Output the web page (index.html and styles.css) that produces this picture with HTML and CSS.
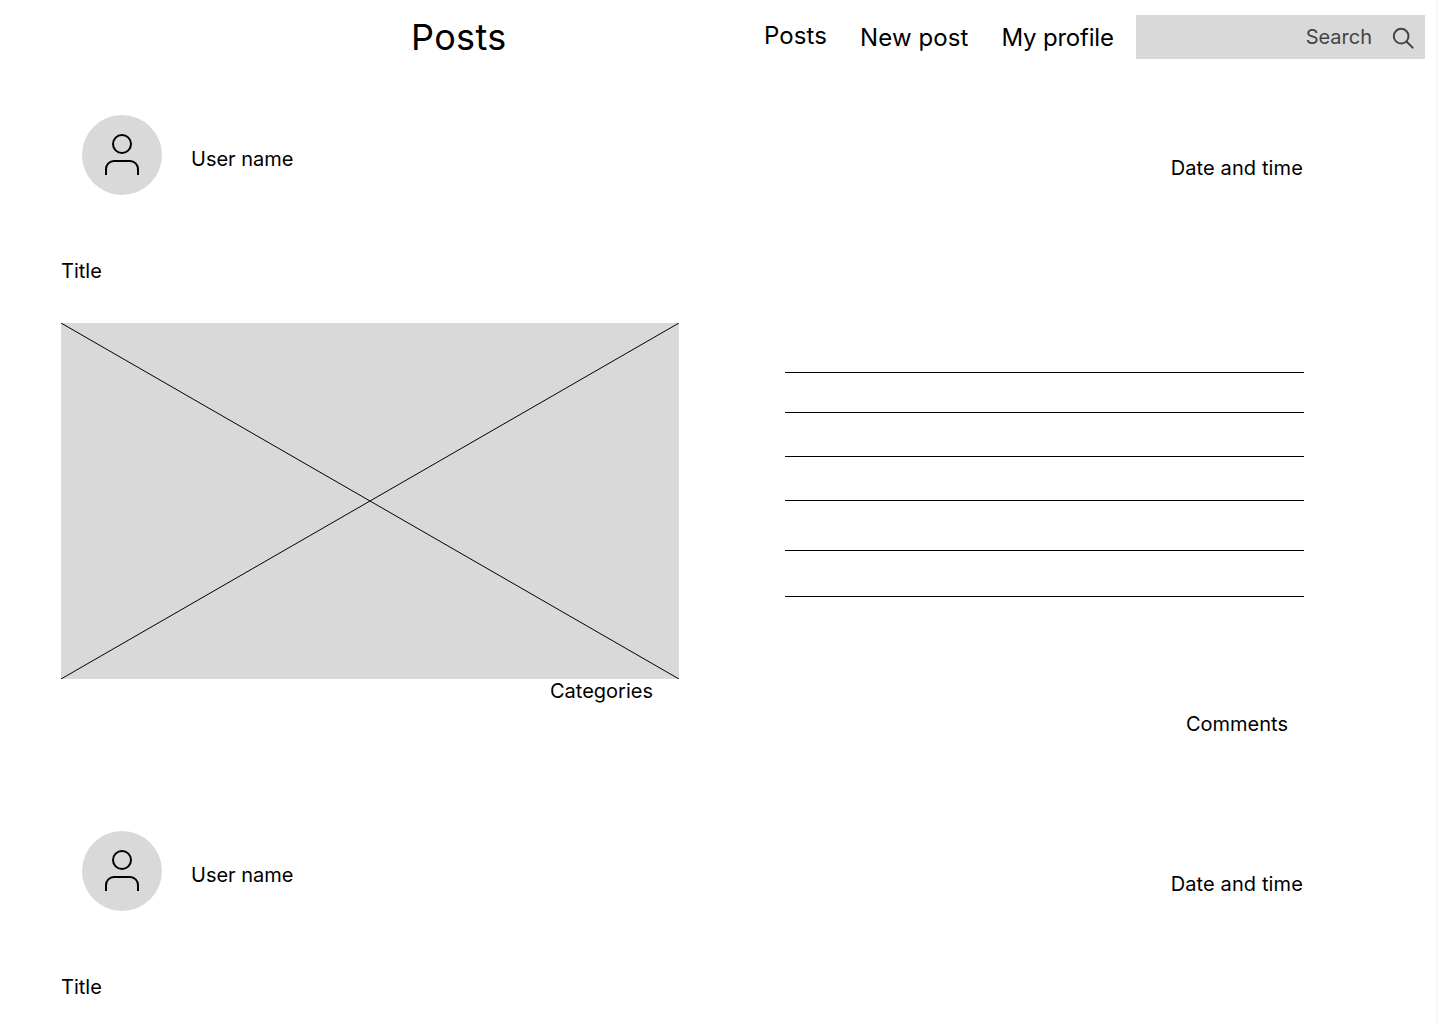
FILE: index.html
```html
<!DOCTYPE html>
<html lang="en">
<head>
<meta charset="utf-8">
<title>Posts</title>
<link rel="stylesheet" href="styles.css">
</head>
<body>
<header class="topbar">
  <h1 class="brand">Posts</h1>
  <nav class="nav">
    <a class="nav-link nav-link-current" href="#">Posts</a>
    <a class="nav-link" href="#">New post</a>
    <a class="nav-link nav-link-profile" href="#">My profile</a>
  </nav>
  <div class="search">
    <span class="search-label">Search</span>
    <svg class="search-icon" viewBox="0 0 24 24" fill="none" stroke="#444" stroke-width="2.2" stroke-linecap="round"><circle cx="10" cy="10" r="8"/><path d="M16 16l6.5 6.5"/></svg>
  </div>
</header>
<main class="feed">
  <article class="post">
    <div class="post-head">
      <div class="avatar">
        <svg class="avatar-icon" viewBox="0 0 34 42" fill="none" stroke="#000" stroke-width="2"><circle cx="17" cy="10" r="9"/><path d="M1 41V35a8 8 0 0 1 8-8H25a8 8 0 0 1 8 8V41"/></svg>
      </div>
      <span class="user-name">User name</span>
      <span class="date">Date and time</span>
    </div>
    <div class="title">Title</div>
    <div class="post-body">
      <div class="media">
        <div class="picture">
          <svg class="picture-cross" viewBox="0 0 618 356" preserveAspectRatio="none"><path d="M0 0L618 356M618 0L0 356" stroke="#000" stroke-width="1" fill="none"/></svg>
        </div>
        <div class="categories">Categories</div>
      </div>
      <div class="content">
        <div class="lines">
          <div class="line"></div><div class="line"></div><div class="line"></div><div class="line"></div><div class="line"></div>
        </div>
        <div class="comments">Comments</div>
      </div>
    </div>
  </article>
  <article class="post">
    <div class="post-head">
      <div class="avatar">
        <svg class="avatar-icon" viewBox="0 0 34 42" fill="none" stroke="#000" stroke-width="2"><circle cx="17" cy="10" r="9"/><path d="M1 41V35a8 8 0 0 1 8-8H25a8 8 0 0 1 8 8V41"/></svg>
      </div>
      <span class="user-name">User name</span>
      <span class="date">Date and time</span>
    </div>
    <div class="title">Title</div>
  </article>
</main>
</body>
</html>
```
FILE: styles.css
```css
html, body {
  height: 1024px;
  overflow: hidden;
}
body {
  margin: 0;
  background: #fff;
  color: #000;
  border-right: 2px solid #f7f7f7;
  box-sizing: border-box;
  font-family: Inter, "Liberation Sans", sans-serif;
  font-size: 20px;
  line-height: 24px;
}
.topbar {
  display: flex;
  align-items: flex-start;
  height: 59px;
  padding-top: 15px;
  padding-left: 411px;
  padding-right: 11px;
}
.brand {
  flex: none;
  width: 94px;
  margin: 0 259px 0 0;
  font-size: 36px;
  line-height: 44px;
  font-weight: 400;
  letter-spacing: 0.35px;
}
.nav {
  display: flex;
  align-items: flex-start;
  gap: 33px;
  padding-top: 8px;
  letter-spacing: 0.1px;
}
.nav-link {
  color: #000;
  text-decoration: none;
  font-size: 24px;
  line-height: 29px;
}
.nav-link-current {
  margin-top: -2px;
}
.nav-link-profile {
  letter-spacing: -0.2px;
}
.search {
  flex: none;
  display: flex;
  align-items: center;
  justify-content: flex-end;
  width: 289px;
  height: 44px;
  margin-left: auto;
  background: #d9d9d9;
  padding-right: 11px;
  box-sizing: border-box;
  color: #444;
}
.search-label {
  margin-right: 20px;
}
.search-icon {
  width: 22px;
  height: 22px;
  margin-top: 2px;
}
.feed {
  padding-top: 41px;
}
.post {
  height: 716px;
  padding-left: 61px;
}
.post-head {
  display: flex;
  align-items: flex-start;
  height: 144px;
  padding-left: 21px;
  padding-right: 133px;
}
.avatar {
  display: flex;
  align-items: center;
  justify-content: center;
  width: 80px;
  height: 80px;
  border-radius: 50%;
  background: #d9d9d9;
}
.avatar-icon {
  width: 34px;
  height: 42px;
}
.user-name {
  margin: 32px 0 0 29px;
}
.date {
  margin: 41px 0 0 auto;
  letter-spacing: 0.12px;
}
.title {
  height: 64px;
}
.post-body {
  display: flex;
  gap: 106px;
}
.media {
  width: 618px;
}
.picture {
  height: 356px;
  background: #d9d9d9;
}
.picture-cross {
  display: block;
  width: 100%;
  height: 100%;
}
.categories {
  margin-right: 26px;
  text-align: right;
}
.content {
  width: 519px;
}
.lines {
  display: grid;
  grid-template-rows: 40px 44px 44px 50px 46px;
  margin-top: 49px;
  border-top: 1px solid #000;
}
.line {
  border-bottom: 1px solid #000;
}
.comments {
  margin-top: 115px;
  margin-right: 16px;
  text-align: right;
}
```
